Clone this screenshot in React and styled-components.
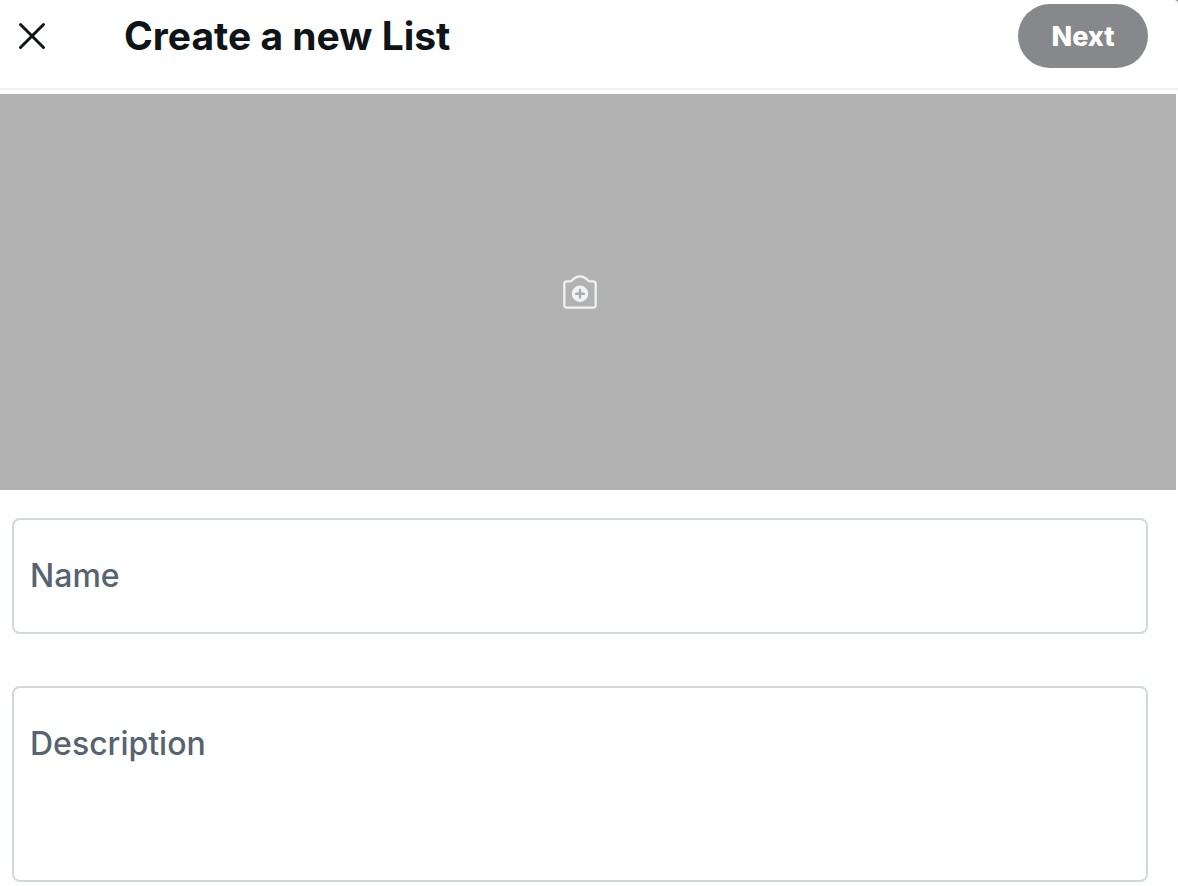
import React, { useState } from "react";
import styled, { createGlobalStyle } from "styled-components";

const GlobalStyle = createGlobalStyle`
  * {
    box-sizing: border-box;
  }

  body {
    margin: 0;
    background-color: #8a8b8e;
    font-family: Inter, "Liberation Sans", sans-serif;
  }
`;

const Sheet = styled.main`
  min-height: 100vh;
  border-top-right-radius: 4px;
  background-color: #ffffff;
`;

const Header = styled.header`
  display: flex;
  align-items: center;
  padding: 4px 30px 20px 16px;
  border-bottom: 2px solid #eff1f2;
`;

const CloseButton = styled.button`
  display: flex;
  padding: 0;
  border: none;
  background: none;
  color: #0f1419;
  cursor: pointer;
`;

const Title = styled.h1`
  flex: 1;
  margin: 0;
  padding-left: 76px;
  color: #0f1419;
  font-size: 39px;
  font-weight: 700;
  line-height: 48px;
`;

const NextButton = styled.button`
  width: 130px;
  height: 64px;
  border: none;
  border-radius: 32px;
  background-color: #87888c;
  color: #ffffff;
  font-family: inherit;
  font-size: 27px;
  font-weight: 800;
`;

const Banner = styled.div`
  display: flex;
  align-items: center;
  justify-content: center;
  height: 396px;
  margin: 4px 2px 0 0;
  padding-right: 16px;
  background-color: #b2b2b2;
`;

const PhotoButton = styled.button`
  display: flex;
  padding: 0;
  border: none;
  background: none;
  color: #eff3f4;
  cursor: pointer;
`;

const Form = styled.form`
  display: grid;
  gap: 52px;
  padding: 28px 30px 4px 12px;
`;

// The label and its control share one grid cell, so the label reads as a placeholder
const Field = styled.div`
  display: grid;
  min-height: ${(props) => (props.$tall ? "196px" : "116px")};
  border: 2px solid #d0d8dc;
  border-radius: 8px;

  > * {
    grid-area: 1 / 1;
  }
`;

const Label = styled.label`
  padding: 34px 16px;
  color: #566370;
  font-size: 32px;
  font-weight: 500;
  line-height: 44px;
  pointer-events: none;
  visibility: ${(props) => (props.$filled ? "hidden" : "visible")};
`;

const TextInput = styled.input`
  width: 100%;
  padding: 34px 16px;
  border: none;
  outline: none;
  background: transparent;
  color: #0f1419;
  font-family: inherit;
  font-size: 32px;
  line-height: 44px;
  resize: none;
`;

const CloseIcon = () => (
  <svg width="32" height="32" viewBox="0 0 32 32" aria-hidden="true">
    <path
      d="M4.5 4.5 27.5 27.5M27.5 4.5 4.5 27.5"
      fill="none"
      stroke="currentColor"
      strokeWidth="3"
      strokeLinecap="round"
    />
  </svg>
);

const CameraIcon = () => (
  <svg width="44" height="44" viewBox="0 0 44 44" aria-hidden="true">
    <path
      d="M8.600 11.300H12c1.400 0 2.100-.6 3-1.700 1.800-2.200 3.900-3.300 7-3.300s5.200 1.100 7 3.300c.9 1.100 1.600 1.700 3 1.700h3.400a2.300 2.300 0 0 1 2.300 2.300v21.800a2.300 2.300 0 0 1-2.300 2.300H8.600a2.300 2.300 0 0 1-2.300-2.300V13.600a2.300 2.300 0 0 1 2.300-2.300z"
      fill="none"
      stroke="currentColor"
      strokeWidth="2.3"
    />
    <circle cx="22" cy="23.7" r="8.200" fill="currentColor" />
    <path
      d="M22 19.900v7.600M18.200 23.700h7.600"
      fill="none"
      stroke="#a9abac"
      strokeWidth="2.400"
      strokeLinecap="round"
    />
  </svg>
);

const App = () => {
  const [name, setName] = useState("");
  const [description, setDescription] = useState("");

  return (
    <>
      <GlobalStyle />
      <Sheet>
        <Header>
          <CloseButton type="button" aria-label="Close">
            <CloseIcon />
          </CloseButton>
          <Title>Create a new List</Title>
          <NextButton type="submit" form="list-form" disabled={!name}>
            Next
          </NextButton>
        </Header>
        <Banner>
          <PhotoButton type="button" aria-label="Add banner photo">
            <CameraIcon />
          </PhotoButton>
        </Banner>
        <Form id="list-form" onSubmit={(e) => e.preventDefault()}>
          <Field>
            <Label htmlFor="list-name" $filled={name !== ""}>
              Name
            </Label>
            <TextInput
              id="list-name"
              type="text"
              value={name}
              onChange={(e) => setName(e.target.value)}
            />
          </Field>
          <Field $tall>
            <Label htmlFor="list-description" $filled={description !== ""}>
              Description
            </Label>
            <TextInput
              as="textarea"
              id="list-description"
              value={description}
              onChange={(e) => setDescription(e.target.value)}
            />
          </Field>
        </Form>
      </Sheet>
    </>
  );
};

export default App;
